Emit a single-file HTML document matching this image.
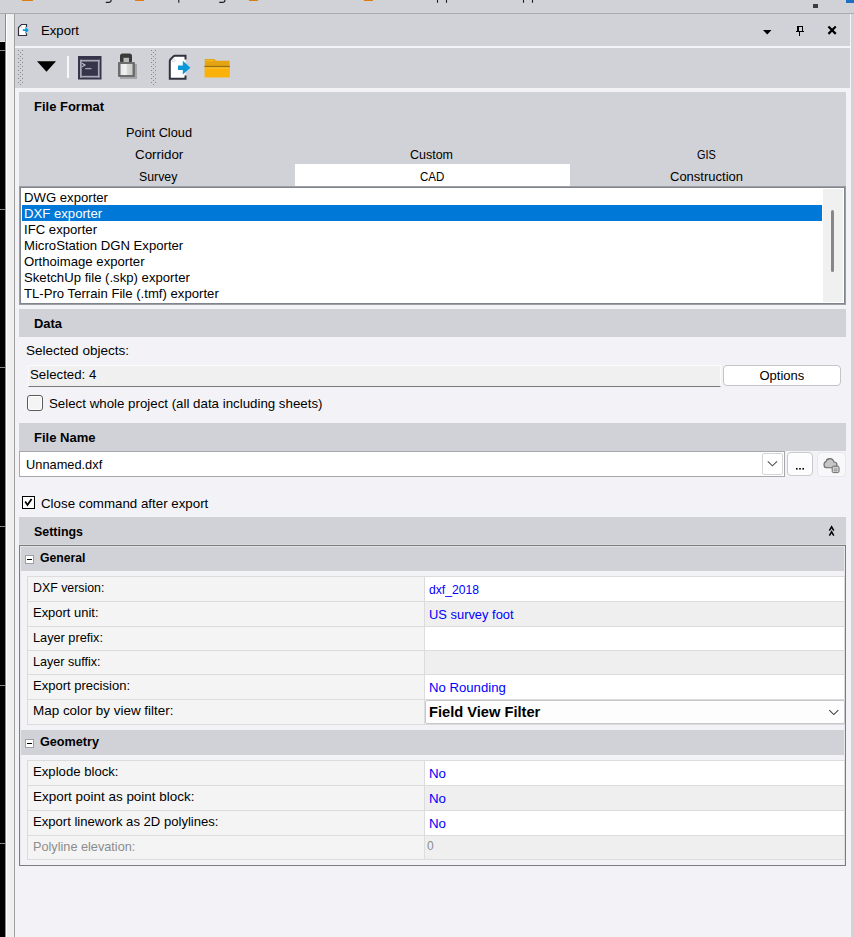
<!DOCTYPE html>
<html><head><meta charset="utf-8"><title>Export</title><style>
html,body{margin:0;padding:0;width:854px;height:937px;overflow:hidden;}
body{position:relative;font-family:"Liberation Sans",sans-serif;}
body>div{position:absolute;}
.t{white-space:nowrap;}
</style></head><body>
<div style="left:0px;top:0px;width:854px;height:937px;background:#d1d2d7;"></div>
<div style="left:0px;top:13px;width:854px;height:1px;background:#a9aaae;"></div>
<div style="left:22px;top:0px;width:11px;height:1.4px;background:#e07b10;"></div>
<div style="left:135px;top:0px;width:9px;height:1.4px;background:#e07b10;"></div>
<div style="left:249px;top:0px;width:9px;height:1.4px;background:#e07b10;"></div>
<div style="left:364px;top:0px;width:9px;height:1.4px;background:#e07b10;"></div>
<svg style="position:absolute;left:0px;top:0px" width="560" height="5" viewBox="0 0 560 5"><path d="M111.2 0 Q111.2 2.4 108.5 2.4 H105.8 M225 0 Q225 2.4 222.3 2.4 H219.3" fill="none" stroke="#1a1a2a" stroke-width="1.1"/><path d="M178.8 0 V2.8 M437.5 0 V2.8 M446.5 0 V2.8 M523.5 0 V2.8 M532.5 0 V2.8" stroke="#1a1a2a" stroke-width="1.1"/></svg>
<div style="left:813px;top:4px;width:5px;height:4px;background:#3a3a48;"></div>
<div style="left:846px;top:0px;width:8px;height:3px;background:#1f6fc0;"></div>
<div style="left:0px;top:14px;width:5px;height:27px;background:#d1d2d7;"></div>
<div style="left:0px;top:41px;width:5px;height:1px;background:#e4e4e8;"></div>
<div style="left:0px;top:42px;width:5px;height:895px;background:#000;"></div>
<div style="left:0px;top:50px;width:5px;height:1px;background:#8a8a8a;"></div>
<div style="left:0px;top:209px;width:5px;height:1px;background:#8a8a8a;"></div>
<div style="left:0px;top:367px;width:5px;height:1px;background:#8a8a8a;"></div>
<div style="left:0px;top:526px;width:5px;height:1px;background:#8a8a8a;"></div>
<div style="left:0px;top:685px;width:5px;height:1px;background:#8a8a8a;"></div>
<div style="left:0px;top:843px;width:5px;height:1px;background:#8a8a8a;"></div>
<div style="left:5px;top:14px;width:1px;height:923px;background:#8c8c8c;"></div>
<div style="left:6px;top:14px;width:1px;height:923px;background:#ffffff;"></div>
<div style="left:7px;top:14px;width:7px;height:923px;background:#efefef;"></div>
<div style="left:14px;top:14px;width:1px;height:923px;background:#a0a0a0;"></div>
<div style="left:15px;top:14px;width:836px;height:923px;background:#f3f3f7;"></div>
<div style="left:850px;top:14px;width:1px;height:923px;background:#f5f5f8;"></div>
<div style="left:15px;top:14px;width:835px;height:32px;background:#d1d2d7;"></div>
<div style="left:15px;top:46px;width:835px;height:2px;background:#f6f6fa;"></div>
<div style="left:15px;top:48px;width:835px;height:40px;background:#d1d2d7;"></div>
<div class="t" style="left:41.00px;top:24px;font-size:13px;line-height:13px;transform:scaleX(1.0114);transform-origin:0 0;">Export</div>
<div style="left:19px;top:92px;width:827px;height:94px;background:#d1d2d7;"></div>
<div class="t" style="left:34.00px;top:100px;font-size:13px;line-height:13px;font-weight:bold;transform:scaleX(0.9991);transform-origin:0 0;">File Format</div>
<div style="left:295px;top:164px;width:275px;height:22px;background:#ffffff;"></div>
<div class="t" style="left:125.50px;top:126px;font-size:13px;line-height:13px;transform:scaleX(0.9820);transform-origin:0 0;">Point Cloud</div>
<div class="t" style="left:135.25px;top:148px;font-size:13px;line-height:13px;transform:scaleX(1.0287);transform-origin:0 0;">Corridor</div>
<div class="t" style="left:410.20px;top:148px;font-size:13px;line-height:13px;transform:scaleX(0.9601);transform-origin:0 0;">Custom</div>
<div class="t" style="left:696.80px;top:148px;font-size:13px;line-height:13px;transform:scaleX(0.8395);transform-origin:0 0;">GIS</div>
<div class="t" style="left:139.05px;top:170px;font-size:13px;line-height:13px;transform:scaleX(0.9466);transform-origin:0 0;">Survey</div>
<div class="t" style="left:420.40px;top:170px;font-size:13px;line-height:13px;transform:scaleX(0.8890);transform-origin:0 0;">CAD</div>
<div class="t" style="left:670.30px;top:170px;font-size:13px;line-height:13px;transform:scaleX(1.0003);transform-origin:0 0;">Construction</div>
<div style="left:19px;top:186px;width:827px;height:119px;background:#9c9ea3;"></div>
<div style="left:20px;top:187px;width:825px;height:117px;background:#80848c;"></div>
<div style="left:21px;top:188px;width:823px;height:115px;background:#ffffff;"></div>
<div style="left:22px;top:205px;width:800px;height:16px;background:#0078d7;"></div>
<div class="t" style="left:24.20px;top:190.6px;font-size:13.6px;line-height:13.6px;transform:scaleX(0.9669);transform-origin:0 0;">DWG exporter</div>
<div class="t" style="left:24.20px;top:206.6px;font-size:13.6px;line-height:13.6px;color:#fff;transform:scaleX(0.9669);transform-origin:0 0;">DXF exporter</div>
<div class="t" style="left:24.20px;top:222.6px;font-size:13.6px;line-height:13.6px;transform:scaleX(0.9669);transform-origin:0 0;">IFC exporter</div>
<div class="t" style="left:24.20px;top:238.6px;font-size:13.6px;line-height:13.6px;transform:scaleX(0.9669);transform-origin:0 0;">MicroStation DGN Exporter</div>
<div class="t" style="left:24.20px;top:254.60000000000002px;font-size:13.6px;line-height:13.6px;transform:scaleX(0.9669);transform-origin:0 0;">Orthoimage exporter</div>
<div class="t" style="left:24.20px;top:270.6px;font-size:13.6px;line-height:13.6px;transform:scaleX(0.9669);transform-origin:0 0;">SketchUp file (.skp) exporter</div>
<div class="t" style="left:24.20px;top:286.6px;font-size:13.6px;line-height:13.6px;transform:scaleX(0.9669);transform-origin:0 0;">TL-Pro Terrain File (.tmf) exporter</div>
<div style="left:823px;top:189px;width:20px;height:113px;background:#f0f0f0;"></div>
<div style="left:831px;top:210px;width:3px;height:62px;background:#878787;border-radius:1.5px;"></div>
<div style="left:19px;top:309px;width:827px;height:28px;background:#d1d2d7;"></div>
<div class="t" style="left:34.40px;top:317px;font-size:13px;line-height:13px;font-weight:bold;transform:scaleX(0.9937);transform-origin:0 0;">Data</div>
<div class="t" style="left:26.40px;top:344px;font-size:13.5px;line-height:13.5px;transform:scaleX(1.0018);transform-origin:0 0;">Selected objects:</div>
<div style="left:28px;top:365px;width:693px;height:22px;background:#f0f0f0;box-sizing:border-box;border:1px solid #fbfbfb;border-bottom:1px solid #7a7a7a;"></div>
<div class="t" style="left:29.80px;top:368px;font-size:13.33px;line-height:13.33px;transform:scaleX(0.9941);transform-origin:0 0;">Selected: 4</div>
<div style="left:723px;top:365px;width:118px;height:21px;background:#ffffff;box-sizing:border-box;border:1px solid #c4c4c8;border-radius:4px;"></div>
<div class="t" style="left:759.50px;top:369px;font-size:13px;line-height:13px;transform:scaleX(1.0000);transform-origin:0 0;">Options</div>
<div style="left:27px;top:395px;width:16px;height:16px;background:#f4f4f4;box-sizing:border-box;border:1px solid #5a5a5a;border-radius:3px;box-shadow:inset 0 0 0 1px #fff;"></div>
<div class="t" style="left:49.20px;top:397px;font-size:13.33px;line-height:13.33px;transform:scaleX(0.9976);transform-origin:0 0;">Select whole project (all data including sheets)</div>
<div style="left:19px;top:423px;width:827px;height:28px;background:#d1d2d7;"></div>
<div class="t" style="left:34.40px;top:431px;font-size:13px;line-height:13px;font-weight:bold;transform:scaleX(1.0030);transform-origin:0 0;">File Name</div>
<div style="left:19px;top:451px;width:766px;height:26px;background:#ffffff;box-sizing:border-box;border:1px solid #a8a8ac;"></div>
<div class="t" style="left:25.80px;top:458px;font-size:13px;line-height:13px;transform:scaleX(0.9855);transform-origin:0 0;">Unnamed.dxf</div>
<div style="left:762px;top:453px;width:21px;height:22px;background:#ffffff;box-sizing:border-box;border:1px solid #d6d6d8;border-radius:2px;"></div>
<svg style="position:absolute;left:762px;top:453px" width="21" height="22" viewBox="0 0 21 22"><path d="M5.8 8.3 L10.4 12.8 L15 8.3" fill="none" stroke="#505050" stroke-width="1.1"/></svg>
<div style="left:787px;top:452px;width:26px;height:24px;background:#fdfdfd;box-sizing:border-box;border:1px solid #cacace;border-radius:4px;"></div>
<svg style="position:absolute;left:787px;top:452px" width="26" height="24" viewBox="0 0 26 24"><rect x="9" y="16" width="1.6" height="1.6" fill="#000"/><rect x="12.2" y="16" width="1.6" height="1.6" fill="#000"/><rect x="15.4" y="16" width="1.6" height="1.6" fill="#000"/></svg>
<div style="left:817px;top:452px;width:29px;height:25px;background:#f8f8fa;box-sizing:border-box;border:1px solid #e8e8ec;border-radius:4px;"></div>
<svg style="position:absolute;left:817px;top:452px" width="29" height="25" viewBox="0 0 29 25"><path d="M9.5 15.8 H17 Q20 15.8 20 13 Q20 10 17 10 Q16.2 6.6 12.8 6.6 Q9.6 6.6 9 9.6 Q7 10 7 12.8 Q7 15.8 9.5 15.8 Z" fill="#c6c6c6" stroke="#6a6a6a" stroke-width="1.1"/><rect x="15.2" y="14.2" width="6.8" height="6.4" rx="1.2" fill="#d0d0d0" stroke="#6a6a6a" stroke-width="1"/><path d="M17 17 H20.2 M17 18.6 H20.2" stroke="#888" stroke-width="0.8"/></svg>
<div style="left:22px;top:496px;width:13px;height:13px;background:#ffffff;box-sizing:border-box;border:1.2px solid #000;"></div>
<svg style="position:absolute;left:22px;top:496px" width="13" height="13" viewBox="0 0 13 13"><path d="M3.2 5.6 L5.5 8.9 L9.6 3.1" fill="none" stroke="#000" stroke-width="1.8"/></svg>
<div class="t" style="left:41.20px;top:497px;font-size:13.33px;line-height:13.33px;transform:scaleX(0.9992);transform-origin:0 0;">Close command after export</div>
<div style="left:19px;top:517px;width:827px;height:27px;background:#d1d2d7;"></div>
<div style="left:19px;top:544px;width:827px;height:1px;background:#d9d9de;"></div>
<div class="t" style="left:34.20px;top:525px;font-size:13px;line-height:13px;font-weight:bold;transform:scaleX(0.9555);transform-origin:0 0;">Settings</div>
<svg style="position:absolute;left:826px;top:523px" width="12" height="16" viewBox="0 0 12 16"><path d="M3.4 7.6 L5.6 3.8 L7.8 7.6 M3.4 12.6 L5.6 8.8 L7.8 12.6" fill="none" stroke="#000" stroke-width="1.5"/></svg>
<div style="left:19px;top:545px;width:827px;height:321px;background:#f3f3f7;box-sizing:border-box;border:1px solid #7c7c7c;"></div>
<div style="left:20px;top:546px;width:825px;height:1px;background:#e4e4e6;"></div>
<div style="left:20px;top:546px;width:1px;height:319px;background:#e8e8ea;"></div>
<div style="left:844px;top:546px;width:1px;height:319px;background:#e8e8ea;"></div>
<div style="left:21px;top:547px;width:823px;height:24px;background:#d1d2d7;"></div>
<div style="left:25px;top:555px;width:9px;height:9px;background:#fff;box-sizing:border-box;border:1px solid #a0a0a0;"></div>
<div style="left:27px;top:559px;width:5px;height:1px;background:#000;"></div>
<div class="t" style="left:39.50px;top:551px;font-size:13px;line-height:13px;font-weight:bold;transform:scaleX(0.9398);transform-origin:0 0;">General</div>
<div style="left:27px;top:576px;width:818px;height:26px;background:#f4f4f4;box-sizing:border-box;border:1px solid #dcdcdc;"></div>
<div style="left:425px;top:577px;width:419px;height:24px;background:#fff;"></div>
<div style="left:424px;top:576px;width:1px;height:26px;background:#dcdcdc;"></div>
<div class="t" style="left:33.40px;top:581px;font-size:13px;line-height:13px;transform:scaleX(0.9503);transform-origin:0 0;">DXF version:</div>
<div class="t" style="left:429.20px;top:583px;font-size:13px;line-height:13px;color:#0000ff;transform:scaleX(0.9347);transform-origin:0 0;">dxf_2018</div>
<div style="left:27px;top:601px;width:818px;height:26px;background:#f4f4f4;box-sizing:border-box;border:1px solid #dcdcdc;"></div>
<div style="left:425px;top:602px;width:419px;height:24px;background:#efefef;"></div>
<div style="left:424px;top:601px;width:1px;height:26px;background:#dcdcdc;"></div>
<div class="t" style="left:33.40px;top:606px;font-size:13px;line-height:13px;transform:scaleX(0.9961);transform-origin:0 0;">Export unit:</div>
<div class="t" style="left:429.20px;top:608px;font-size:13px;line-height:13px;color:#0000ff;transform:scaleX(0.9923);transform-origin:0 0;">US survey foot</div>
<div style="left:27px;top:626px;width:818px;height:25px;background:#f4f4f4;box-sizing:border-box;border:1px solid #dcdcdc;"></div>
<div style="left:425px;top:627px;width:419px;height:23px;background:#fff;"></div>
<div style="left:424px;top:626px;width:1px;height:25px;background:#dcdcdc;"></div>
<div class="t" style="left:33.40px;top:631px;font-size:13px;line-height:13px;transform:scaleX(0.9786);transform-origin:0 0;">Layer prefix:</div>
<div style="left:27px;top:650px;width:818px;height:25px;background:#f4f4f4;box-sizing:border-box;border:1px solid #dcdcdc;"></div>
<div style="left:425px;top:651px;width:419px;height:23px;background:#efefef;"></div>
<div style="left:424px;top:650px;width:1px;height:25px;background:#dcdcdc;"></div>
<div class="t" style="left:33.40px;top:655px;font-size:13px;line-height:13px;transform:scaleX(0.9664);transform-origin:0 0;">Layer suffix:</div>
<div style="left:27px;top:674px;width:818px;height:26px;background:#f4f4f4;box-sizing:border-box;border:1px solid #dcdcdc;"></div>
<div style="left:425px;top:675px;width:419px;height:24px;background:#fff;"></div>
<div style="left:424px;top:674px;width:1px;height:26px;background:#dcdcdc;"></div>
<div class="t" style="left:33.40px;top:679px;font-size:13px;line-height:13px;transform:scaleX(1.0018);transform-origin:0 0;">Export precision:</div>
<div class="t" style="left:429.20px;top:681px;font-size:13px;line-height:13px;color:#0000ff;transform:scaleX(1.0120);transform-origin:0 0;">No Rounding</div>
<div style="left:27px;top:699px;width:818px;height:26px;background:#f4f4f4;box-sizing:border-box;border:1px solid #dcdcdc;"></div>
<div style="left:425px;top:700px;width:419px;height:24px;background:#fff;"></div>
<div style="left:424px;top:699px;width:1px;height:26px;background:#dcdcdc;"></div>
<div class="t" style="left:33.40px;top:704px;font-size:13px;line-height:13px;transform:scaleX(1.0344);transform-origin:0 0;">Map color by view filter:</div>
<div style="left:425px;top:700px;width:420px;height:24px;background:#fdfdfd;box-sizing:border-box;border:1px solid #c8c8cc;border-radius:2px;"></div>
<div class="t" style="left:428.80px;top:706px;font-size:13.8px;line-height:13.8px;font-weight:bold;transform:scaleX(1.0619);transform-origin:0 0;">Field View Filter</div>
<svg style="position:absolute;left:826px;top:706px" width="16" height="12" viewBox="0 0 16 12"><path d="M3.3 4.2 L7.8 8.6 L12.3 4.2" fill="none" stroke="#404040" stroke-width="1.1"/></svg>
<div style="left:21px;top:730px;width:823px;height:25px;background:#d1d2d7;"></div>
<div style="left:25px;top:739px;width:9px;height:9px;background:#fff;box-sizing:border-box;border:1px solid #a0a0a0;"></div>
<div style="left:27px;top:743px;width:5px;height:1px;background:#000;"></div>
<div class="t" style="left:39.50px;top:735px;font-size:13px;line-height:13px;font-weight:bold;transform:scaleX(0.9722);transform-origin:0 0;">Geometry</div>
<div style="left:27px;top:760px;width:818px;height:26px;background:#f4f4f4;box-sizing:border-box;border:1px solid #dcdcdc;"></div>
<div style="left:425px;top:761px;width:419px;height:24px;background:#fff;"></div>
<div style="left:424px;top:760px;width:1px;height:26px;background:#dcdcdc;"></div>
<div class="t" style="left:33.40px;top:765px;font-size:13px;line-height:13px;transform:scaleX(1.0112);transform-origin:0 0;">Explode block:</div>
<div class="t" style="left:429.20px;top:767px;font-size:13px;line-height:13px;color:#0000ff;transform:scaleX(1.0230);transform-origin:0 0;">No</div>
<div style="left:27px;top:785px;width:818px;height:26px;background:#f4f4f4;box-sizing:border-box;border:1px solid #dcdcdc;"></div>
<div style="left:425px;top:786px;width:419px;height:24px;background:#efefef;"></div>
<div style="left:424px;top:785px;width:1px;height:26px;background:#dcdcdc;"></div>
<div class="t" style="left:33.40px;top:790px;font-size:13px;line-height:13px;transform:scaleX(1.0340);transform-origin:0 0;">Export point as point block:</div>
<div class="t" style="left:429.20px;top:792px;font-size:13px;line-height:13px;color:#0000ff;transform:scaleX(1.0230);transform-origin:0 0;">No</div>
<div style="left:27px;top:810px;width:818px;height:26px;background:#f4f4f4;box-sizing:border-box;border:1px solid #dcdcdc;"></div>
<div style="left:425px;top:811px;width:419px;height:24px;background:#fff;"></div>
<div style="left:424px;top:810px;width:1px;height:26px;background:#dcdcdc;"></div>
<div class="t" style="left:33.40px;top:815px;font-size:13px;line-height:13px;transform:scaleX(1.0068);transform-origin:0 0;">Export linework as 2D polylines:</div>
<div class="t" style="left:429.20px;top:817px;font-size:13px;line-height:13px;color:#0000ff;transform:scaleX(1.0230);transform-origin:0 0;">No</div>
<div style="left:27px;top:835px;width:818px;height:25px;background:#f4f4f4;box-sizing:border-box;border:1px solid #dcdcdc;"></div>
<div style="left:425px;top:836px;width:419px;height:23px;background:#efefef;"></div>
<div style="left:424px;top:835px;width:1px;height:25px;background:#dcdcdc;"></div>
<div class="t" style="left:33.40px;top:840px;font-size:13px;line-height:13px;color:#8c8c8c;transform:scaleX(0.9763);transform-origin:0 0;">Polyline elevation:</div>
<div class="t" style="left:427.00px;top:839px;font-size:13px;line-height:13px;color:#8c8c8c;transform:scaleX(0.9267);transform-origin:0 0;">0</div>
<svg style="position:absolute;left:17px;top:23px" width="14" height="15" viewBox="0 0 14 15"><path d="M1.5 4.5 L4.5 1.5 H9.5 V12.5 H1.5 Z" fill="#fff"/><path d="M9.5 4.2 V1.5 H4.5 L1.5 4.5 V12.5 H9.5 V10.2" fill="none" stroke="#30313c" stroke-width="1.2"/><circle cx="4.3" cy="4.2" r="0.9" fill="#d8d8d8"/><path d="M5.8 6.3 H8.3 V3.7 L11.7 7.2 L8.3 10.7 V8.1 H5.8 Z" fill="#0b9ad9"/></svg>
<svg style="position:absolute;left:760px;top:24px" width="80" height="14" viewBox="0 0 80 14"><path d="M3 6 H11.5 L7.25 10.5 Z" fill="#000"/><rect x="37" y="2" width="2" height="6" fill="#000"/><rect x="37" y="2" width="6" height="1" fill="#000"/><rect x="42" y="2" width="1" height="6" fill="#000"/><rect x="36" y="7" width="8" height="1" fill="#000"/><rect x="39" y="8" width="1" height="4" fill="#000"/><path d="M69.2 3.3 L75 9.1 M75 3.3 L69.2 9.1" stroke="#000" stroke-width="2.2" stroke-linecap="square"/></svg>
<svg style="position:absolute;left:18px;top:50px" width="5" height="35" viewBox="0 0 5 35"><rect x="0" y="0" width="1" height="1" fill="#8a8a8e"/><rect x="4" y="0" width="1" height="1" fill="#8a8a8e"/><rect x="2" y="2" width="1" height="1" fill="#8a8a8e"/><rect x="0" y="4" width="1" height="1" fill="#8a8a8e"/><rect x="4" y="4" width="1" height="1" fill="#8a8a8e"/><rect x="2" y="6" width="1" height="1" fill="#8a8a8e"/><rect x="0" y="8" width="1" height="1" fill="#8a8a8e"/><rect x="4" y="8" width="1" height="1" fill="#8a8a8e"/><rect x="2" y="10" width="1" height="1" fill="#8a8a8e"/><rect x="0" y="12" width="1" height="1" fill="#8a8a8e"/><rect x="4" y="12" width="1" height="1" fill="#8a8a8e"/><rect x="2" y="14" width="1" height="1" fill="#8a8a8e"/><rect x="0" y="16" width="1" height="1" fill="#8a8a8e"/><rect x="4" y="16" width="1" height="1" fill="#8a8a8e"/><rect x="2" y="18" width="1" height="1" fill="#8a8a8e"/><rect x="0" y="20" width="1" height="1" fill="#8a8a8e"/><rect x="4" y="20" width="1" height="1" fill="#8a8a8e"/><rect x="2" y="22" width="1" height="1" fill="#8a8a8e"/><rect x="0" y="24" width="1" height="1" fill="#8a8a8e"/><rect x="4" y="24" width="1" height="1" fill="#8a8a8e"/><rect x="2" y="26" width="1" height="1" fill="#8a8a8e"/><rect x="0" y="28" width="1" height="1" fill="#8a8a8e"/><rect x="4" y="28" width="1" height="1" fill="#8a8a8e"/><rect x="2" y="30" width="1" height="1" fill="#8a8a8e"/><rect x="0" y="32" width="1" height="1" fill="#8a8a8e"/><rect x="4" y="32" width="1" height="1" fill="#8a8a8e"/><rect x="2" y="34" width="1" height="1" fill="#8a8a8e"/></svg>
<svg style="position:absolute;left:151px;top:50px" width="5" height="35" viewBox="0 0 5 35"><rect x="0" y="0" width="1" height="1" fill="#8a8a8e"/><rect x="4" y="0" width="1" height="1" fill="#8a8a8e"/><rect x="2" y="2" width="1" height="1" fill="#8a8a8e"/><rect x="0" y="4" width="1" height="1" fill="#8a8a8e"/><rect x="4" y="4" width="1" height="1" fill="#8a8a8e"/><rect x="2" y="6" width="1" height="1" fill="#8a8a8e"/><rect x="0" y="8" width="1" height="1" fill="#8a8a8e"/><rect x="4" y="8" width="1" height="1" fill="#8a8a8e"/><rect x="2" y="10" width="1" height="1" fill="#8a8a8e"/><rect x="0" y="12" width="1" height="1" fill="#8a8a8e"/><rect x="4" y="12" width="1" height="1" fill="#8a8a8e"/><rect x="2" y="14" width="1" height="1" fill="#8a8a8e"/><rect x="0" y="16" width="1" height="1" fill="#8a8a8e"/><rect x="4" y="16" width="1" height="1" fill="#8a8a8e"/><rect x="2" y="18" width="1" height="1" fill="#8a8a8e"/><rect x="0" y="20" width="1" height="1" fill="#8a8a8e"/><rect x="4" y="20" width="1" height="1" fill="#8a8a8e"/><rect x="2" y="22" width="1" height="1" fill="#8a8a8e"/><rect x="0" y="24" width="1" height="1" fill="#8a8a8e"/><rect x="4" y="24" width="1" height="1" fill="#8a8a8e"/><rect x="2" y="26" width="1" height="1" fill="#8a8a8e"/><rect x="0" y="28" width="1" height="1" fill="#8a8a8e"/><rect x="4" y="28" width="1" height="1" fill="#8a8a8e"/><rect x="2" y="30" width="1" height="1" fill="#8a8a8e"/><rect x="0" y="32" width="1" height="1" fill="#8a8a8e"/><rect x="4" y="32" width="1" height="1" fill="#8a8a8e"/><rect x="2" y="34" width="1" height="1" fill="#8a8a8e"/></svg>
<svg style="position:absolute;left:36px;top:60px" width="21" height="13" viewBox="0 0 21 13"><path d="M1 1.2 H20 L10.5 11.8 Z" fill="#000"/></svg>
<div style="left:67px;top:56px;width:2px;height:22px;background:#f8f8fb;"></div>
<svg style="position:absolute;left:77px;top:55px" width="26" height="26" viewBox="0 0 26 26"><rect x="1" y="1" width="23.5" height="23.5" fill="#34344a"/><rect x="3" y="4.8" width="19.6" height="1.7" fill="#a9a9b6"/><rect x="3" y="20.8" width="19.6" height="1.7" fill="#a9a9b6"/><rect x="3" y="4.8" width="1.7" height="17.7" fill="#a9a9b6"/><rect x="20.9" y="4.8" width="1.7" height="17.7" fill="#a9a9b6"/><path d="M5 8.3 L8 10 L5 11.7" fill="none" stroke="#c0c0cc" stroke-width="1.1"/><path d="M8.2 13.6 H14.5" stroke="#a0a0b0" stroke-width="1.3"/></svg>
<svg style="position:absolute;left:116px;top:52px" width="24" height="30" viewBox="0 0 24 30"><defs><linearGradient id="lg" x1="0" x2="1" y1="0" y2="0"><stop offset="0" stop-color="#e6e6e6"/><stop offset="0.45" stop-color="#f2f2f2"/><stop offset="0.6" stop-color="#d6d6d6"/><stop offset="1" stop-color="#cdcdcd"/></linearGradient></defs><rect x="4" y="12" width="17" height="15" fill="#a6a6aa"/><rect x="4" y="1.5" width="12" height="9.5" rx="2.5" fill="#3a3a3a"/><rect x="7.5" y="5.8" width="5.5" height="4.5" fill="#b8b8b8"/><rect x="2" y="10" width="17" height="15" rx="1" fill="#6c6c6c"/><rect x="4.5" y="12" width="12" height="11" fill="url(#lg)"/></svg>
<svg style="position:absolute;left:166px;top:53px" width="28" height="30" viewBox="0 0 28 30"><path d="M3.8 8 Q3.8 7 4.6 6.2 L7.2 3.6 Q8 2.8 9 2.8 H19.5 V25.8 H3.8 Z" fill="#fff"/><path d="M19.5 6.5 V2.8 H9 Q8 2.8 7.2 3.6 L4.6 6.2 Q3.8 7 3.8 8 V25.8 H19.5 V22.5" fill="none" stroke="#30313c" stroke-width="2"/><circle cx="7.6" cy="7.4" r="1.4" fill="none" stroke="#d0d0d0" stroke-width="0.9"/><path d="M12 12.4 H16.8 V7.8 L24.4 14.7 L16.8 21.6 V17.1 H12 Z" fill="#0a98d8"/></svg>
<svg style="position:absolute;left:202px;top:57px" width="32" height="24" viewBox="0 0 32 24"><path d="M2.8 2.4 Q2.8 2 3.3 2 H12.3 L14 3.8 H27.2 Q27.6 3.8 27.6 4.3 V10 H2.8 Z" fill="#e5a512"/><rect x="3.6" y="3" width="8" height="1.2" fill="#f4bb1a"/><rect x="2.4" y="8.8" width="25.6" height="1.5" fill="#9a7212"/><path d="M2.6 10.3 H27.8 V19.8 Q27.8 20.6 27 20.6 H3.4 Q2.6 20.6 2.6 19.8 Z" fill="#fab20b"/><rect x="3.4" y="11.2" width="23.6" height="0.8" fill="#fcc22a"/></svg>
</body></html>
